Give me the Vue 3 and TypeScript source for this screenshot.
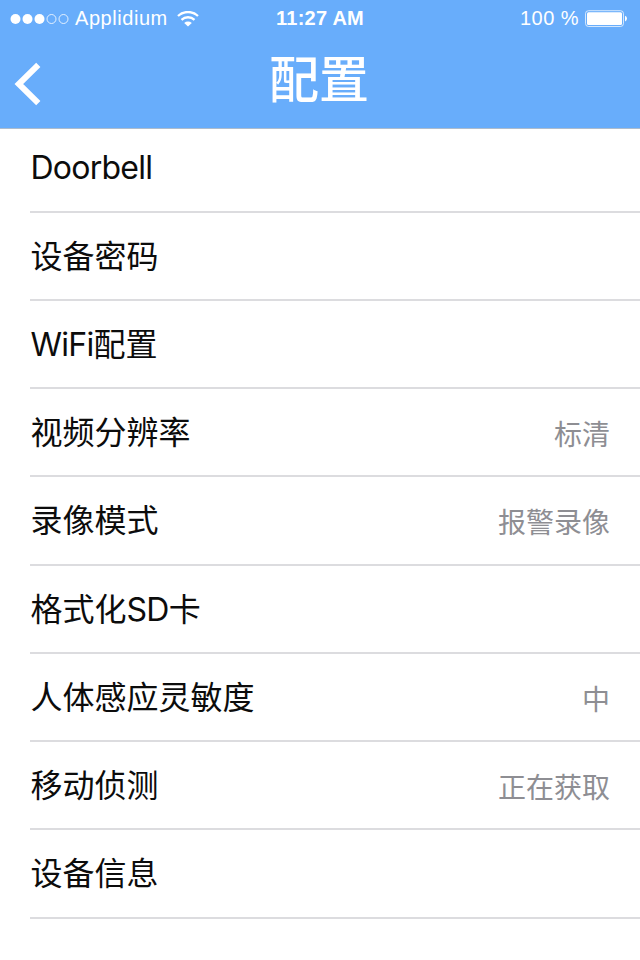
<script setup lang="ts">
interface Row { label: string; value?: string }
const rows: Row[] = [
  { label: 'Doorbell' },
  { label: '设备密码' },
  { label: 'WiFi配置' },
  { label: '视频分辨率', value: '标清' },
  { label: '录像模式', value: '报警录像' },
  { label: '格式化SD卡' },
  { label: '人体感应灵敏度', value: '中' },
  { label: '移动侦测', value: '正在获取' },
  { label: '设备信息' },
]

// Latin runs are tracked tighter than the Chinese text around them.
const runs = (text: string): string[] => text.match(/[A-Za-z]+|[^A-Za-z]+/g) ?? []
const isLatin = (run: string): boolean => /^[A-Za-z]/.test(run)
</script>

<template>
  <main class="screen">
    <header class="header">
      <div class="status">
        <div class="carrier">
          <svg class="dots" width="60" height="12" viewBox="0 0 60 12">
            <g fill="#fff"><circle cx="5.5" cy="6" r="5" /><circle cx="17.5" cy="6" r="5" /><circle cx="29.5" cy="6" r="5" /></g>
            <g fill="none" stroke="#fff" stroke-opacity=".8"><circle cx="41.5" cy="6" r="4.5" /><circle cx="53.5" cy="6" r="4.5" /></g>
          </svg>
          <span class="name">Applidium</span>
          <svg class="wifi" width="22" height="16" viewBox="0 0 22 16">
            <g fill="none" stroke="#fff" stroke-width="2.3"><path d="M1 5a14.5 14.5 0 0 1 20 0" /><path d="M4.5 8.800a9.500 9.500 0 0 1 13 0" /></g>
            <path d="M7.200 12a5.600 5.600 0 0 1 7.600 0L11 15.500z" fill="#fff" />
          </svg>
        </div>
        <time class="time">11:27 AM</time>
        <div class="power">
          <span class="percent">100 %</span>
          <svg width="42" height="18" viewBox="0 0 42 18">
            <rect x=".5" y=".7" width="38" height="15.8" rx="3" fill="none" stroke="#fff" stroke-opacity=".7" />
            <rect x="2" y="2.2" width="35" height="12.8" rx="1.5" fill="#fff" />
            <path d="M40 5.8q2 .6 2 2.8t-2 2.8z" fill="#fff" />
          </svg>
        </div>
      </div>
      <nav class="nav">
        <button class="back" aria-label="返回">
          <svg width="28" height="44" viewBox="0 0 28 44"><path d="M25.3 2.8 5.8 22l19.5 19.2" fill="none" stroke="#fff" stroke-width="6" /></svg>
        </button>
        <h1>配置</h1>
      </nav>
    </header>
    <ul class="list">
      <li v-for="row in rows" :key="row.label" class="row">
        <span class="label"><span v-for="(run, i) in runs(row.label)" :key="i" :class="{ latin: isLatin(run) }">{{ run }}</span></span>
        <span v-if="row.value" class="value">{{ row.value }}</span>
      </li>
    </ul>
  </main>
</template>

<style>
body { background: #fff; }
</style>
<style scoped>
.screen { width: 640px; height: 960px; overflow: hidden; background: #fff; font-family: Inter, "Noto Sans CJK SC", sans-serif; color: #0c0c0c; }
.header { height: 129px; background: #68adfb; color: #fff; border-bottom: 1px solid #adbccd; box-sizing: border-box; }
.status { height: 37px; display: grid; grid-template-columns: 1fr auto 1fr; align-items: center; font: 20px/37px "Liberation Sans", sans-serif; }
.carrier { display: flex; align-items: center; padding-left: 10px; }
.name { margin-left: 5px; letter-spacing: .55px; }
.wifi { margin-left: 9px; }
.time { font-weight: 700; letter-spacing: .25px; }
.power { display: flex; align-items: center; justify-content: flex-end; gap: 6px; padding-right: 13px; }
.percent { letter-spacing: .45px; }
.nav { height: 91px; display: grid; grid-template-columns: 60px 1fr 60px; }
.back { border: 0; background: none; padding: 0 0 0 13px; display: flex; align-items: center; height: 94px; }
.back svg { display: block; }
h1 { margin: 0 1px 0 -1px; font-size: 50px; line-height: 86px; font-weight: 500; text-align: center; }
.list { list-style: none; margin: 0; padding: 0 0 0 30px; }
.row { height: 88.25px; box-sizing: border-box; display: flex; align-items: flex-start; justify-content: space-between; border-bottom: 2px solid #dcdcdf; padding-right: 30px; line-height: 87px; }
.row:first-child { height: 83.5px; line-height: 78px; }
.label { font-size: 32px; padding-left: .5px; }
.latin { letter-spacing: -.75px; }
.value { font-size: 28px; color: #8e8e93; line-height: 93px; }
</style>
